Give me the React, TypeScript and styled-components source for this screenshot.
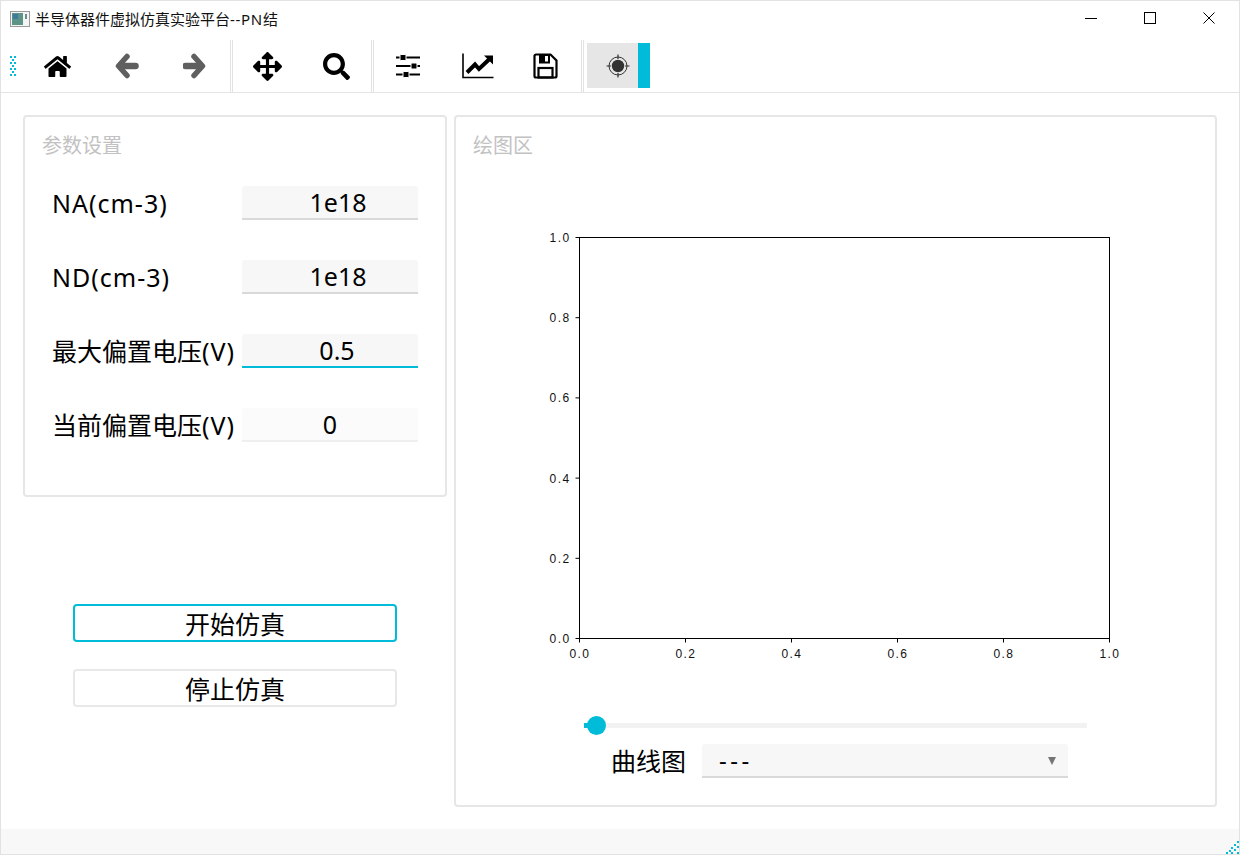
import React from "react";
import styled, { createGlobalStyle } from "styled-components";
import { FaHome, FaArrowsAlt, FaSearch } from "react-icons/fa";

const CYAN = "#00bcd8";
const FONT = `"Noto Sans", "Noto Sans CJK SC", sans-serif`;

const GlobalStyle = createGlobalStyle`
  html, body {
    margin: 0;
    padding: 0;
    background: #ffffff;
    font-family: ${FONT};
    color: #000000;
    overflow: hidden;
  }
`;

const Window = styled.div`
  box-sizing: border-box;
  width: 1240px;
  height: 855px;
  border: 1px solid #e2e2e2;
  display: flex;
  flex-direction: column;
  background: #ffffff;
`;

const TitleBar = styled.div`
  height: 39px;
  flex: none;
  display: flex;
  align-items: center;
  padding-left: 9px;
`;

const TitleText = styled.span`
  margin-left: 5px;
  font-size: 15px;
  line-height: 20px;
  margin-top: -3px;
  color: #111111;
`;

const LatinRun = styled.span<{ $spacing: number }>`
  letter-spacing: ${(p) => p.$spacing}px;
`;

const WindowControls = styled.div`
  margin-left: auto;
  display: flex;
  height: 100%;
  padding-right: 1px;
`;

const WindowControl = styled.div`
  width: 59px;
  display: flex;
  align-items: center;
  justify-content: center;
  padding-bottom: 6px;
  box-sizing: border-box;
`;

const Toolbar = styled.div`
  height: 53px;
  flex: none;
  box-sizing: border-box;
  border-bottom: 1px solid #e4e4e4;
  display: flex;
  align-items: stretch;
`;

const GripSlot = styled.div`
  width: 22px;
  display: flex;
  align-items: center;
  padding-left: 9px;
  box-sizing: border-box;
`;

const ToolButton = styled.div`
  width: 69px;
  display: flex;
  align-items: center;
  justify-content: center;
  color: #000000;
`;

const ToolSeparator = styled.div`
  width: 3px;
  box-sizing: border-box;
  border-left: 1px solid #e2e2e2;
  border-right: 1px solid #e2e2e2;
`;

const ToggleButton = styled.div`
  width: 63px;
  height: 45px;
  margin: 3px 0 0 3px;
  box-sizing: border-box;
  background: #e6e6e6;
  border-right: 12px solid ${CYAN};
  display: flex;
  align-items: center;
  justify-content: flex-end;
  padding-right: 8px;
`;

const Main = styled.div`
  flex: 1;
  display: flex;
  gap: 7px;
  padding: 22px 22px 0;
  min-height: 0;
`;

const LeftColumn = styled.div`
  width: 424px;
  flex: none;
  display: flex;
  flex-direction: column;
`;

const Panel = styled.section<{ $width: number; $height: number }>`
  box-sizing: border-box;
  width: ${(p) => p.$width}px;
  height: ${(p) => p.$height}px;
  border: 2px solid #e6e6e6;
  border-radius: 4px;
  background: #ffffff;
`;

const PanelTitle = styled.div`
  padding: 15px 0 0 17px;
  font-size: 20px;
  line-height: 28px;
  color: #c2c2c2;
`;

const ParamGrid = styled.div`
  display: grid;
  grid-template-columns: 190px 176px;
  row-gap: 40px;
  padding: 26px 0 0 27px;
`;

const ParamLabel = styled.label`
  font-size: 25px;
  line-height: 34px;
  white-space: nowrap;
`;

const ParamInput = styled.input<{ $focused?: boolean; $nudge?: number }>`
  box-sizing: border-box;
  width: 176px;
  height: 34px;
  border: none;
  border-bottom: 2px solid ${(p) => (p.$focused ? CYAN : "#d9d9d9")};
  border-radius: 3px 3px 0 0;
  background: #f7f7f7;
  outline: none;
  padding: 0 0 0 ${(p) => p.$nudge ?? 16}px;
  font-family: ${FONT};
  font-size: 25px;
  line-height: 30px;
  text-align: center;
  color: #000000;

  &:disabled {
    background: #fbfbfb;
    border-bottom-color: #efefef;
    color: #000000;
  }
`;

const ButtonStack = styled.div`
  display: flex;
  flex-direction: column;
  gap: 27px;
  margin: 107px 0 0 50px;
`;

const ActionButton = styled.button<{ $primary?: boolean }>`
  box-sizing: border-box;
  width: 324px;
  height: 38px;
  padding: 2px 0 0;
  border: 2px solid ${(p) => (p.$primary ? CYAN : "#e8e8e8")};
  border-radius: 4px;
  background: #ffffff;
  font-family: ${FONT};
  font-size: 25px;
  line-height: 32px;
  color: #000000;
`;

const ChartFrame = styled.div`
  margin: 65px 0 0 79px;
  width: 590px;
  height: 440px;
`;

const SliderTrack = styled.div`
  position: relative;
  width: 503px;
  height: 5px;
  margin: 58px 0 0 128px;
  background: #f2f2f2;
`;

const SliderFill = styled.div`
  width: 8px;
  height: 100%;
  background: ${CYAN};
`;

const SliderThumb = styled.div`
  position: absolute;
  left: 3px;
  top: -7px;
  width: 19px;
  height: 19px;
  border-radius: 50%;
  background: ${CYAN};
`;

const SelectRow = styled.div`
  display: flex;
  align-items: center;
  margin: 16px 0 0 155px;
`;

const SelectLabel = styled.span`
  width: 91px;
  font-size: 25px;
  line-height: 34px;
`;

const SelectBox = styled.div`
  box-sizing: border-box;
  width: 366px;
  height: 34px;
  display: flex;
  align-items: center;
  justify-content: space-between;
  padding: 0 12px 0 17px;
  background: #f7f7f7;
  border-bottom: 2px solid #d9d9d9;
  border-radius: 3px 3px 0 0;
`;

const SelectValue = styled.span`
  font-size: 24px;
  line-height: 32px;
  letter-spacing: 3.5px;
`;

const Caret = styled.span`
  width: 0;
  height: 0;
  border-left: 4.5px solid transparent;
  border-right: 4.5px solid transparent;
  border-top: 8px solid #757575;
  margin-top: 2px;
`;

const StatusBar = styled.div`
  height: 25px;
  flex: none;
  margin-top: auto;
  background: #f8f8f8;
  display: flex;
  align-items: flex-end;
  justify-content: flex-end;
`;

const AppIcon = () => (
  <svg width="20" height="16" viewBox="0 0 20 16" style={{ marginTop: -4 }}>
    <rect x="0.5" y="0.5" width="19" height="15" fill="#f4f4f4" stroke="#9a9a9a" />
    <rect x="2" y="2" width="11" height="12" fill="#5d9488" />
    <rect x="3" y="3" width="5" height="5" fill="#3f7a9c" />
    <rect x="15" y="3" width="2" height="5" fill="#6a8f86" />
  </svg>
);

const MinimizeGlyph = () => (
  <svg width="12" height="12" viewBox="0 0 12 12">
    <path d="M0 6.5H12" stroke="#000" strokeWidth="1" />
  </svg>
);

const MaximizeGlyph = () => (
  <svg width="12" height="12" viewBox="0 0 12 12">
    <rect x="0.5" y="0.5" width="11" height="11" fill="none" stroke="#000" />
  </svg>
);

const CloseGlyph = () => (
  <svg width="12" height="12" viewBox="0 0 12 12">
    <path d="M0.5 0.5L11.5 11.5M11.5 0.5L0.5 11.5" stroke="#000" />
  </svg>
);

const Dots = ({ points }: { points: [number, number][] }) => {
  const w = Math.max(...points.map((p) => p[0])) + 2;
  const h = Math.max(...points.map((p) => p[1])) + 2;
  return (
    <svg width={w} height={h} viewBox={`0 0 ${w} ${h}`}>
      {points.map(([x, y]) => (
        <rect key={`${x}-${y}`} x={x} y={y} width="2" height="2" fill={CYAN} />
      ))}
    </svg>
  );
};

const toolbarGrip: [number, number][] = [
  [0, 0],
  [4, 0],
  [2, 3],
  [0, 6],
  [4, 6],
  [2, 9],
  [0, 12],
  [4, 12],
  [2, 15],
  [0, 18],
  [4, 18],
];

const cornerGrip: [number, number][] = [
  [11, 0],
  [8, 3],
  [11, 5],
  [5, 6],
  [3, 9],
  [8, 8],
  [0, 11],
  [5, 11],
  [11, 11],
];

const ArrowLeftIcon = () => (
  <svg width="26" height="26" viewBox="0 0 26 26">
    <path d="M13 3.5L4.5 13L13 22.5" fill="none" stroke="#5f5f5f" strokeWidth="5.5" strokeLinecap="round" strokeLinejoin="round" />
    <path d="M7 13H21.5" stroke="#5f5f5f" strokeWidth="6.5" strokeLinecap="round" />
  </svg>
);

const ArrowRightIcon = () => (
  <svg width="26" height="26" viewBox="0 0 26 26">
    <path d="M11 3.5L19.5 13L11 22.5" fill="none" stroke="#5f5f5f" strokeWidth="5.5" strokeLinecap="round" strokeLinejoin="round" />
    <path d="M2.5 13H17" stroke="#5f5f5f" strokeWidth="6.5" strokeLinecap="round" />
  </svg>
);

const SlidersIcon = () => (
  <svg width="26" height="24" viewBox="0 0 26 24">
    <path d="M0 3.5H24M0 12H24M0 20.5H24" stroke="#000" strokeWidth="2" fill="none" />
    <rect x="4" y="0.5" width="6" height="6" rx="1" fill="#000" stroke="#fff" />
    <rect x="15" y="9" width="6" height="6" rx="1" fill="#000" stroke="#fff" />
    <rect x="7" y="17.5" width="6" height="6" rx="1" fill="#000" stroke="#fff" />
  </svg>
);

const TrendIcon = () => (
  <svg width="32" height="26" viewBox="0 0 32 26">
    <path d="M1 0.5V24.5H31.5" fill="none" stroke="#000" strokeWidth="1.6" />
    <path d="M5 19.5L13 11.5L17 16L27 6.5" fill="none" stroke="#000" strokeWidth="4" />
    <path d="M22 2.5H31V11.5Z" fill="#000" />
  </svg>
);

const SaveIcon = () => (
  <svg width="28" height="26" viewBox="0 0 28 26">
    <path d="M3 1.5H17.5L23.5 7.5V23A1.5 1.5 0 0 1 22 24.5H3A1.5 1.5 0 0 1 1.5 23V3A1.5 1.5 0 0 1 3 1.5Z" fill="none" stroke="#000" strokeWidth="2.2" />
    <path d="M6 2H17V10.5H6Z" fill="#000" />
    <rect x="12" y="3" width="3" height="5.5" fill="#fff" />
    <rect x="5.5" y="15" width="14" height="9.5" fill="none" stroke="#000" strokeWidth="2.2" />
  </svg>
);

const TargetIcon = () => (
  <svg width="24" height="24" viewBox="0 0 24 24">
    <circle cx="12" cy="12" r="9" fill="none" stroke="#333" strokeWidth="1" />
    <circle cx="12" cy="12" r="6.2" fill="#333" />
    <path d="M12 0.5V5M12 19V23.5M0.5 12H5M19 12H23.5" stroke="#333" strokeWidth="1.2" />
  </svg>
);

const ticks = [0, 0.2, 0.4, 0.6, 0.8, 1];

const Plot = () => {
  const left = 44.5;
  const right = 574.5;
  const top = 12.5;
  const bottom = 413.5;
  const labelStyle = { fontFamily: '"Liberation Sans", sans-serif', fontSize: 12, letterSpacing: 1.4, fill: "#111" };
  return (
    <svg width="590" height="440" viewBox="0 0 590 440">
      <rect x={left} y={top} width={right - left} height={bottom - top} fill="#fff" stroke="#000" />
      {ticks.map((t) => {
        const x = left + (right - left) * t;
        const y = bottom - (bottom - top) * t;
        const label = t.toFixed(1);
        return (
          <g key={t}>
            <path d={`M${x} ${bottom}v4M${left} ${y}h-4`} stroke="#000" />
            <text x={x + 0.5} y={bottom + 19} textAnchor="middle" style={labelStyle}>
              {label}
            </text>
            <text x={left - 9} y={y + 4.5} textAnchor="end" style={labelStyle}>
              {label}
            </text>
          </g>
        );
      })}
    </svg>
  );
};

const params = [
  { text: "", latin: "NA(cm-3)", value: "1e18" },
  { text: "", latin: "ND(cm-3)", value: "1e18" },
  { text: "最大偏置电压", latin: "(V)", value: "0.5", focused: true, nudge: 14 },
  { text: "当前偏置电压", latin: "(V)", value: "0", disabled: true, nudge: 0 },
];

export default function App() {
  return (
    <>
      <GlobalStyle />
      <Window>
        <TitleBar>
          <AppIcon />
          <TitleText>
            半导体器件虚拟仿真实验平台<LatinRun $spacing={0.7}>--PN</LatinRun>结
          </TitleText>
          <WindowControls>
            <WindowControl>
              <MinimizeGlyph />
            </WindowControl>
            <WindowControl>
              <MaximizeGlyph />
            </WindowControl>
            <WindowControl>
              <CloseGlyph />
            </WindowControl>
          </WindowControls>
        </TitleBar>

        <Toolbar>
          <GripSlot>
            <Dots points={toolbarGrip} />
          </GripSlot>
          <ToolButton>
            <FaHome size={27} />
          </ToolButton>
          <ToolButton>
            <ArrowLeftIcon />
          </ToolButton>
          <ToolButton>
            <ArrowRightIcon />
          </ToolButton>
          <ToolSeparator />
          <ToolButton>
            <FaArrowsAlt size={29} />
          </ToolButton>
          <ToolButton>
            <FaSearch size={27} />
          </ToolButton>
          <ToolSeparator />
          <ToolButton>
            <SlidersIcon />
          </ToolButton>
          <ToolButton>
            <TrendIcon />
          </ToolButton>
          <ToolButton>
            <SaveIcon />
          </ToolButton>
          <ToolSeparator />
          <ToggleButton>
            <TargetIcon />
          </ToggleButton>
        </Toolbar>

        <Main>
          <LeftColumn>
            <Panel $width={424} $height={382}>
              <PanelTitle>参数设置</PanelTitle>
              <ParamGrid>
                {params.map((p) => (
                  <React.Fragment key={p.latin + p.text}>
                    <ParamLabel>
                      {p.text}
                      <LatinRun $spacing={1}>{p.latin}</LatinRun>
                    </ParamLabel>
                    <ParamInput
                      readOnly
                      value={p.value}
                      disabled={p.disabled}
                      $focused={p.focused}
                      $nudge={p.nudge}
                    />
                  </React.Fragment>
                ))}
              </ParamGrid>
            </Panel>
            <ButtonStack>
              <ActionButton $primary>开始仿真</ActionButton>
              <ActionButton>停止仿真</ActionButton>
            </ButtonStack>
          </LeftColumn>

          <Panel $width={763} $height={692}>
            <PanelTitle>绘图区</PanelTitle>
            <ChartFrame>
              <Plot />
            </ChartFrame>
            <SliderTrack>
              <SliderFill />
              <SliderThumb />
            </SliderTrack>
            <SelectRow>
              <SelectLabel>曲线图</SelectLabel>
              <SelectBox>
                <SelectValue>---</SelectValue>
                <Caret />
              </SelectBox>
            </SelectRow>
          </Panel>
        </Main>

        <StatusBar>
          <Dots points={cornerGrip} />
        </StatusBar>
      </Window>
    </>
  );
}
